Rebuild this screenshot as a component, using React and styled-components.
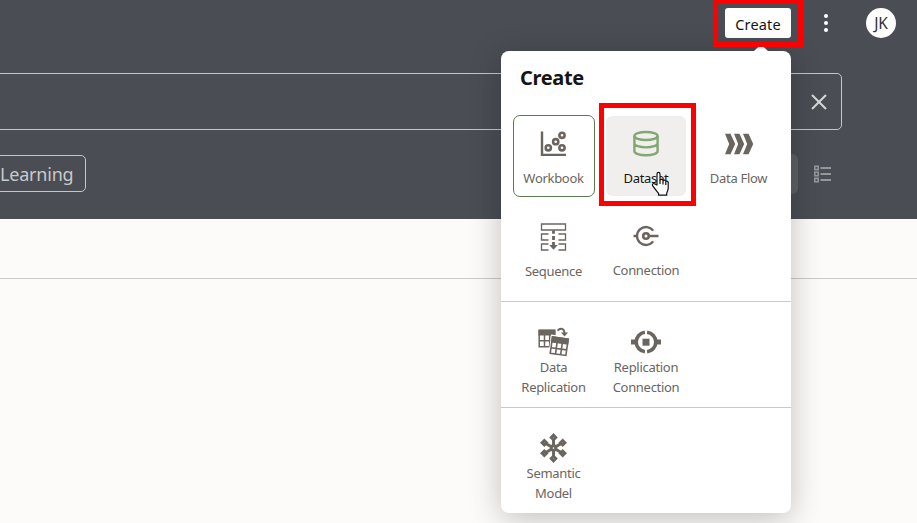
import React from 'react';
import styled, { createGlobalStyle } from 'styled-components';

const GlobalStyle = createGlobalStyle`
  * { box-sizing: border-box; }
  body { margin: 0; overflow: hidden; background: #fcfbfa; }
`;

const Page = styled.div`
  position: relative;
  width: 917px;
  height: 523px;
  overflow: hidden;
  background: #fcfbfa;
  font-family: 'Noto Sans', sans-serif;
`;

const Header = styled.header`
  height: 219px;
  background: #4a4d54;
`;

const TopBar = styled.div`
  display: flex;
  justify-content: flex-end;
  align-items: center;
  height: 46px;
  padding-right: 21px;
`;

const CreateButton = styled.button`
  width: 66px;
  height: 30px;
  padding: 2px 0 0;
  border: 0;
  border-radius: 3px;
  background: #fff;
  color: #161513;
  font: 14.5px/20px 'Noto Sans', sans-serif;
  letter-spacing: 0.15px;
`;

const MenuButton = styled.button`
  display: flex;
  justify-content: center;
  width: 30px;
  margin: 0 25px 0 20px;
  padding: 0;
  border: 0;
  background: none;
`;

const Avatar = styled.div`
  width: 30px;
  height: 30px;
  border-radius: 50%;
  background: #fff;
  color: #33302d;
  font-size: 15.5px;
  line-height: 31px;
  letter-spacing: -0.2px;
  text-align: center;
`;

const SearchBox = styled.div`
  display: flex;
  justify-content: flex-end;
  align-items: center;
  width: 852px;
  height: 57px;
  margin: 27px 0 0 -10px;
  padding: 0 14px 0 0;
  border: 1px solid #c5c6c7;
  border-radius: 5px;
`;

const FilterRow = styled.div`
  display: flex;
  justify-content: space-between;
  align-items: center;
  width: 831px;
  height: 40px;
  margin-top: 24px;
`;

const Chip = styled.div`
  width: 96px;
  height: 37px;
  margin: -1px 0 0 -10px;
  padding-left: 9px;
  border: 1px solid #c5c6c7;
  border-radius: 5px;
  color: #c9cacb;
  font-size: 18px;
  line-height: 36px;
  letter-spacing: -0.2px;
  white-space: nowrap;
`;

const ViewSwitch = styled.div`
  display: flex;
  align-items: center;
  gap: 15px;
`;

const ActiveView = styled.div`
  width: 40px;
  height: 40px;
  border-radius: 6px;
  background: #5d6064;
`;

const TabStrip = styled.div`
  height: 60px;
  border-bottom: 1px solid #cbcac8;
`;

const Popup = styled.section`
  position: absolute;
  left: 501px;
  top: 51px;
  width: 290px;
  height: 462px;
  border-radius: 8px;
  background: #fff;
  box-shadow: 0 6px 32px rgba(0, 0, 0, 0.24);
`;

const Pointer = styled.svg`
  position: absolute;
  left: 252px;
  top: -5px;
`;

const Title = styled.h2`
  height: 64px;
  margin: 0;
  padding: 13px 0 0 19px;
  color: #161513;
  font-size: 20px;
  font-weight: 700;
  line-height: 27px;
  letter-spacing: -0.35px;
`;

const Tiles = styled.div`
  display: grid;
  grid-template-columns: 82px 82px 83px;
  grid-auto-rows: 82px;
  gap: 11px 10px;
  height: ${(p) => p.$height}px;
  padding: ${(p) => p.$top || 0}px 0 0 12px;
  border-bottom: ${(p) => (p.$last ? '0' : '1px solid #cbcac8')};
`;

const Tile = styled.div`
  display: flex;
  flex-direction: column;
  align-items: center;
  padding-top: ${(p) => (p.$compact ? 8 : p.$raised ? 11 : 12)}px;
  border: 1px solid ${(p) => (p.$selected ? '#5b7950' : 'transparent')};
  border-radius: 7px;
  background: ${(p) => (p.$active ? '#f1efed' : 'transparent')};
  background-clip: padding-box;
  color: ${(p) => (p.$active ? '#161513' : '#6b6560')};

  &:nth-child(3n + 1) { padding-right: 1px; }
`;

const IconBox = styled.div`
  display: flex;
  align-items: center;
  justify-content: center;
  height: 32px;
  margin-bottom: ${(p) => (p.$compact ? -1 : 8)}px;
  svg { display: block; }
`;

const Label = styled.div`
  font-size: 13px;
  line-height: 20px;
  letter-spacing: -0.3px;
  text-align: center;
  white-space: pre-line;
`;

const Highlight = styled.div`
  position: absolute;
  left: ${(p) => p.$x}px;
  top: ${(p) => p.$y}px;
  width: ${(p) => p.$w}px;
  height: ${(p) => p.$h}px;
  border: 5px solid #f00;
`;

const Cursor = styled.svg`
  position: absolute;
  left: 651px;
  top: 171px;
`;

const GREY = '#6b6560';

const Dots = () => (
  <svg width="6" height="20" viewBox="0 0 6 20" fill="#fff">
    <circle cx="3" cy="3" r="2" /><circle cx="3" cy="10" r="2" /><circle cx="3" cy="17" r="2" />
  </svg>
);

const Close = () => (
  <svg width="16" height="16" viewBox="0 0 16 16" stroke="#d6d6d6" strokeWidth="2.1">
    <path d="M1 1l14 14M15 1L1 15" />
  </svg>
);

const ListIcon = () => (
  <svg width="18" height="18" viewBox="0 0 18 18" fill="none" stroke="#96979a">
    <path d="M1.8 1.2h3.4v3.4H1.8zM1.8 7.3h3.4v3.4H1.8zM1.8 13.4h3.4v3.4H1.8z" strokeWidth="1.6" />
    <path d="M7.5 3H18M7.5 9H18M7.5 15H18" strokeWidth="1.9" />
  </svg>
);

const WorkbookIcon = () => (
  <svg width="27" height="28" viewBox="0 0 27 28" fill="none" stroke={GREY}>
    <path d="M2 1.5v23.4H26" strokeWidth="2.4" />
    <g strokeWidth="2.6">
      <circle cx="8.3" cy="17.8" r="2.6" /><circle cx="15.7" cy="11.7" r="2.6" />
      <circle cx="22" cy="5.3" r="2.6" /><circle cx="22" cy="17.8" r="2.6" />
    </g>
  </svg>
);

const DatasetIcon = () => (
  <svg width="28" height="28" viewBox="0 0 28 28" fill="none" stroke="#83a673" strokeWidth="2.4">
    <ellipse cx="14" cy="6" rx="11.6" ry="4" />
    <path d="M2.4 6v15.2c0 2.2 5.2 4 11.6 4s11.6-1.8 11.6-4V6M2.4 13.4c0 2.2 5.2 4 11.6 4s11.6-1.8 11.6-4" />
  </svg>
);

const FlowIcon = () => (
  <svg width="28" height="22" viewBox="0 0 28 22" fill={GREY}>
    <path d="M0 .8h5.5l4.7 10.2-4.7 10.2H0L4.200 11zM9 .8h5.500l4.700 10.200-4.700 10.200H9l4.200-10.200zM18 .8h5.500l4.700 10.200-4.700 10.200H18l4.200-10.200z" />
  </svg>
);

const SequenceIcon = () => (
  <svg width="27" height="28" viewBox="0 0 27 28" fill="none" stroke={GREY} strokeWidth="1.3">
    <path d="M1.5 1h24v6h-24zM8.5 11h-7v6h7M18.5 11h7v6h-7M8.5 21h-7v6h7M18.5 21h7v6h-7" />
    <path d="M13.5 7.5v3.2M13.5 13v4M13.5 19v4" strokeWidth="2.8" />
    <path d="M9.3 22h8.4l-4.2 4.7z" fill={GREY} stroke="none" />
  </svg>
);

const ConnectionIcon = () => (
  <svg width="26" height="22" viewBox="0 0 26 22" fill="none" stroke={GREY} strokeWidth="2.3">
    <path d="M20.2 5.6a9 9 0 1 0 0 10.800" />
    <circle cx="13" cy="11" r="2.8" strokeWidth="2.6" />
    <path d="M.5 11h4M16 11h9.5" />
  </svg>
);

const ReplicationIcon = () => (
  <svg width="31" height="32" viewBox="0 0 31 32" fill="none" stroke={GREY}>
    <path d="M1.2 4.5h15.6v16.300H1.200zM1.200 14.800h15.600M6.500 9v12M11.700 9v12" strokeWidth="1.5" />
    <path d="M.5 3.500h16.800v6H.5z" fill={GREY} stroke="none" />
    <g transform="rotate(8 21 21)">
      <path d="M11.500 9.800h19v20h-19z" fill="#fff" stroke="none" />
      <path d="M13.200 12h15.800v16.400H13.200zM13.200 22.800h15.800M18.500 17v11.500M23.700 17v11.500" strokeWidth="1.6" />
      <path d="M12.400 11.200h17.400v6.400H12.400z" fill={GREY} stroke="none" />
    </g>
    <path d="M19.500 4.600c3-3.200 7-2.200 7 2.600" strokeWidth="1.8" />
    <path d="M23 6.400h7l-3.500 4z" fill={GREY} stroke="none" />
  </svg>
);

const ReplicationConnectionIcon = () => (
  <svg width="30" height="24" viewBox="0 0 30 24" fill="none" stroke={GREY}>
    <path d="M13.900 2.200a9.870 9.870 0 0 0 0 19.600M16.100 2.200a9.870 9.870 0 0 1 0 19.600" strokeWidth="3.6" />
    <path d="M11.500 8.700h7v7h-7z" fill={GREY} stroke="none" />
    <path d="M0 9.500h4.500v5H0zM25.500 9.500H30v5h-4.500z" fill={GREY} stroke="none" />
  </svg>
);

const SemanticIcon = () => (
  <svg width="31" height="30" viewBox="0 0 31 30" fill="none" stroke={GREY}>
    {[0, 60, 120, 180, 240, 300].map((a) => (
      <g key={a} transform={`rotate(${a} 15.5 15)`}>
        <path d="M15.5 13V6" strokeWidth="2.9" />
        <g transform={`rotate(${-a} 15.5 4.4)`}>
          <path d="M15.5 2.1l2.300 2.300-2.300 2.300-2.300-2.300z" fill="#fff" strokeWidth="2.8" />
        </g>
      </g>
    ))}
    <circle cx="15.5" cy="15" r="2.3" fill="#fff" strokeWidth="2.9" />
  </svg>
);

const Item = ({ icon, label, ...state }) => (
  <Tile {...state}>
    <IconBox $compact={state.$compact}>{icon}</IconBox>
    <Label>{label}</Label>
  </Tile>
);

export default function App() {
  return (
    <Page>
      <GlobalStyle />
      <Header>
        <TopBar>
          <CreateButton>Create</CreateButton>
          <MenuButton aria-label="More"><Dots /></MenuButton>
          <Avatar>JK</Avatar>
        </TopBar>
        <SearchBox><Close /></SearchBox>
        <FilterRow>
          <Chip>Learning</Chip>
          <ViewSwitch><ActiveView /><ListIcon /></ViewSwitch>
        </FilterRow>
      </Header>
      <TabStrip />
      <Popup>
        <Pointer width="16" height="6" viewBox="0 0 16 6" fill="#fff">
          <path d="M0 6L4.500 1.800Q8 -.8 11.500 1.800L16 6z" />
        </Pointer>
        <Title>Create</Title>
        <Tiles $height={187}>
          <Item $selected icon={<WorkbookIcon />} label="Workbook" />
          <Item $active icon={<DatasetIcon />} label="Dataset" />
          <Item icon={<FlowIcon />} label="Data Flow" />
          <Item icon={<SequenceIcon />} label="Sequence" />
          <Item $raised icon={<ConnectionIcon />} label="Connection" />
        </Tiles>
        <Tiles $height={106} $top={15}>
          <Item $compact icon={<ReplicationIcon />} label={'Data\nReplication'} />
          <Item $compact icon={<ReplicationConnectionIcon />} label={'Replication\nConnection'} />
        </Tiles>
        <Tiles $height={105} $top={15} $last>
          <Item $compact icon={<SemanticIcon />} label={'Semantic\nModel'} />
        </Tiles>
      </Popup>
      <Highlight $x={713} $y={-1} $w={90} $h={48} />
      <Highlight $x={599} $y={103} $w={97} $h={103} />
      <Cursor width="19" height="26" viewBox="0 0 19 26" fill="#fff" stroke="#111" strokeWidth="1.2" strokeLinejoin="round">
        <path d="M6 14V3.200C6 .8 9 .8 9 3.200V9c.5-1.100 2.700-.9 3 .6.6-.9 2.600-.6 2.800.8 1.100-.7 2.400 0 2.400 1.500v5.300c0 2.200-1.500 3.500-1.500 5.200v1.800H7.600v-1.800C5.300 19.500 3 16.800 1.600 14.600c-.8-1.500.9-2.700 2.200-1.700z" />
        <path d="M9 9v4M12 10v3.500M14.800 11v3" fill="none" />
      </Cursor>
    </Page>
  );
}
